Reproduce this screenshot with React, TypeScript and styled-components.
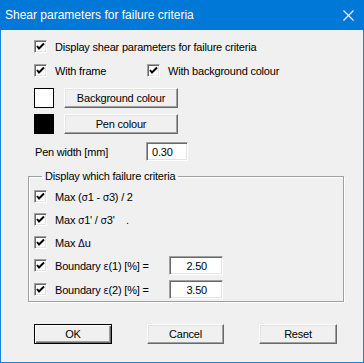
import React from "react";
import styled, { createGlobalStyle } from "styled-components";

const GlobalStyle = createGlobalStyle`
  html, body { margin: 0; padding: 0; background: #ffffff; }
  * { box-sizing: border-box; }
`;

const Window = styled.div`
  width: 364px;
  height: 363px;
  background: #f0f0f0;
  border: 1px solid #1883d7;
  border-top: none;
  display: flex;
  flex-direction: column;
  font-family: "Liberation Sans", Arial, sans-serif;
  font-size: 11px;
  letter-spacing: -0.2px;
  color: #000;
`;

const TitleBar = styled.div`
  height: 30px;
  margin: 0 -1px;
  background: #0078d7;
  color: #fff;
  display: flex;
  align-items: center;
  justify-content: space-between;
  padding: 0 10px 0 5px;
  font-family: "Liberation Sans", Arial, sans-serif;
  font-size: 12px;
  letter-spacing: 0;
`;

const Body = styled.div`
  display: flex;
  flex-direction: column;
  padding: 7px 0 0 33px;
`;

const Row = styled.div<{ $mt?: number; $h?: number }>`
  display: flex;
  align-items: center;
  height: ${(p) => p.$h ?? 19}px;
  margin-top: ${(p) => p.$mt ?? 0}px;
`;

const CheckLabel = styled.label<{ $w?: number }>`
  display: flex;
  align-items: center;
  gap: 8px;
  width: ${(p) => (p.$w ? `${p.$w}px` : "auto")};
`;

const Box = styled.span`
  width: 13px;
  height: 13px;
  background: #fff;
  border: 1px solid;
  border-color: #a0a0a0 #ffffff #ffffff #a0a0a0;
  box-shadow: inset 1px 1px 0 #696969, inset -1px -1px 0 #e3e3e3;
  display: flex;
  align-items: center;
  justify-content: center;
  flex: none;
`;

const Swatch = styled.div<{ $c: string }>`
  width: 20px;
  height: 20px;
  background: ${(p) => p.$c};
  border: 1px solid #000;
  margin-right: 10px;
`;

const Button = styled.button<{ $w: number; $default?: boolean }>`
  width: ${(p) => p.$w}px;
  height: 20px;
  padding: 0;
  background: #f0f0f0;
  font-family: "Liberation Sans", Arial, sans-serif;
  font-size: 11px;
  letter-spacing: -0.2px;
  color: #000;
  border: 1px solid;
  border-color: ${(p) => (p.$default ? "#000" : "#ffffff #696969 #696969 #ffffff")};
  box-shadow: ${(p) =>
    p.$default
      ? "inset 1px 1px 0 #ffffff, inset -1px -1px 0 #696969, inset -2px -2px 0 #a0a0a0"
      : "inset -1px -1px 0 #a0a0a0, inset 1px 1px 0 #e3e3e3"};
`;

const Field = styled.div<{ $w: number }>`
  width: ${(p) => p.$w}px;
  height: 19px;
  background: #fff;
  border: 1px solid;
  border-color: #a0a0a0 #ffffff #ffffff #a0a0a0;
  box-shadow: inset 1px 1px 0 #696969, inset -1px -1px 0 #e3e3e3;
  display: flex;
  align-items: center;
  padding-left: 5px;
`;

const Group = styled.fieldset`
  margin: 9px 19px 0 -6px;
  padding: 5px 0 0 5px;
  height: 132px;
  border: 1px solid #a0a0a0;
  box-shadow: inset 1px 1px 0 #fff, 1px 1px 0 #fff;
  display: flex;
  flex-direction: column;
`;

const Legend = styled.legend`
  padding: 0 3px;
  margin-left: 8px;
  font-size: 11px;
`;

const Footer = styled.div`
  display: flex;
  gap: 35px;
  margin-top: 22px;
`;

const Greek = styled.span`
  color: #0a0a40;
  font-family: "DejaVu Sans", sans-serif;
  font-size: 10px;
`;

const Check = () => (
  <Box>
    <svg width="9" height="9" viewBox="0 0 9 9">
      <path d="M1 4 L3 6.5 L8 1.5" stroke="#000" strokeWidth="2" fill="none" />
    </svg>
  </Box>
);

const CloseIcon = () => (
  <svg width="11" height="11" viewBox="0 0 11 11">
    <path d="M0.5 0.5 L10.5 10.5 M10.5 0.5 L0.5 10.5" stroke="#fff" strokeWidth="1.1" />
  </svg>
);

export default function App() {
  return (
    <>
      <GlobalStyle />
      <Window>
        <TitleBar>
          <span>Shear parameters for failure criteria</span>
          <CloseIcon />
        </TitleBar>
        <Body>
          <Row>
            <CheckLabel>
              <Check />
              Display shear parameters for failure criteria
            </CheckLabel>
          </Row>
          <Row $mt={5}>
            <CheckLabel $w={113}>
              <Check />
              With frame
            </CheckLabel>
            <CheckLabel>
              <Check />
              With background colour
            </CheckLabel>
          </Row>
          <Row $mt={8} $h={20}>
            <Swatch $c="#ffffff" />
            <Button $w={114}>Background colour</Button>
          </Row>
          <Row $mt={6} $h={20}>
            <Swatch $c="#000000" />
            <Button $w={114}>Pen colour</Button>
          </Row>
          <Row $mt={8}>
            <span style={{ width: 112, paddingLeft: 1 }}>Pen width [mm]</span>
            <Field $w={42}>0.30</Field>
          </Row>
          <Group>
            <Legend>Display which failure criteria</Legend>
            <Row>
              <CheckLabel>
                <Check />
                <span>
                  Max (<Greek>σ</Greek>1 - <Greek>σ</Greek>3) / 2
                </span>
              </CheckLabel>
            </Row>
            <Row $mt={4}>
              <CheckLabel>
                <Check />
                <span>
                  Max <Greek>σ</Greek>1' / <Greek>σ</Greek>3'&nbsp;&nbsp;&nbsp;&nbsp;.
                </span>
              </CheckLabel>
            </Row>
            <Row $mt={4}>
              <CheckLabel>
                <Check />
                <span>
                  Max <Greek>Δ</Greek>u
                </span>
              </CheckLabel>
            </Row>
            <Row $mt={4}>
              <CheckLabel $w={135}>
                <Check />
                <span>
                  Boundary <Greek>ε</Greek>(1) [%] =
                </span>
              </CheckLabel>
              <Field $w={54}>&nbsp;&nbsp;&nbsp;&nbsp;2.50</Field>
            </Row>
            <Row $mt={5}>
              <CheckLabel $w={135}>
                <Check />
                <span>
                  Boundary <Greek>ε</Greek>(2) [%] =
                </span>
              </CheckLabel>
              <Field $w={54}>&nbsp;&nbsp;&nbsp;&nbsp;3.50</Field>
            </Row>
          </Group>
          <Footer>
            <Button $w={78} $default>
              OK
            </Button>
            <Button $w={77}>Cancel</Button>
            <Button $w={78}>Reset</Button>
          </Footer>
        </Body>
      </Window>
    </>
  );
}
